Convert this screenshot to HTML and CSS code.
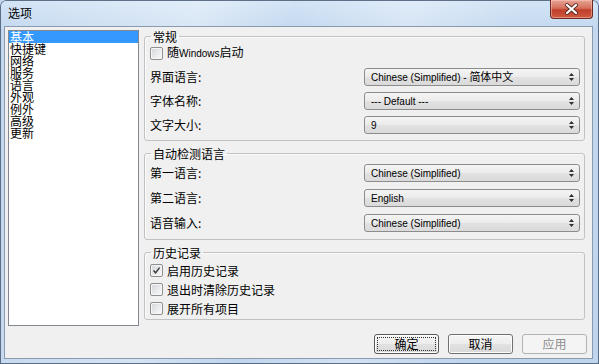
FILE: index.html
```html
<!DOCTYPE html>
<html lang="zh-CN">
<head>
<meta charset="utf-8">
<title>选项</title>
<link rel="stylesheet" href="styles.css">
</head>
<body>
<div class="window">
  <div class="titlebar">
    <span class="title">选项</span>
    <div class="close">
      <svg width="41" height="18" viewBox="0 0 41 18">
        <path d="M16 5 L25 13 M25 5 L16 13" stroke="#5a2a24" stroke-width="4" stroke-linecap="round"/>
        <path d="M16 5 L25 13 M25 5 L16 13" stroke="#ffffff" stroke-width="2.2" stroke-linecap="round"/>
      </svg>
    </div>
  </div>
  <div class="client">
    <div class="main">
      <ul class="list">
        <li class="item selected">基本</li>
        <li class="item">快捷键</li>
        <li class="item">网络</li>
        <li class="item">服务</li>
        <li class="item">语言</li>
        <li class="item">外观</li>
        <li class="item">例外</li>
        <li class="item">高级</li>
        <li class="item">更新</li>
      </ul>
      <div class="panels">
        <fieldset class="group group-general">
          <legend class="legend">常规</legend>
          <label class="check-row first-check"><span class="checkbox"></span><span class="check-text">随<span class="latin">Windows</span>启动</span></label>
          <div class="form-grid grid-general">
            <span class="label">界面语言:</span>
            <div class="select"><span class="select-text"><span class="latin">Chinese (Simplified) - </span><span class="cjk-small">简体中文</span></span><span class="arrows"><svg width="5" height="8" viewBox="0 0 5 8"><path d="M0 3 L2.5 0 L5 3 Z M0 5 L2.5 8 L5 5 Z" fill="#303030"/></svg></span></div>
            <span class="label">字体名称:</span>
            <div class="select"><span class="select-text"><span class="latin">--- Default ---</span></span><span class="arrows"><svg width="5" height="8" viewBox="0 0 5 8"><path d="M0 3 L2.5 0 L5 3 Z M0 5 L2.5 8 L5 5 Z" fill="#303030"/></svg></span></div>
            <span class="label">文字大小:</span>
            <div class="select"><span class="select-text"><span class="latin">9</span></span><span class="arrows"><svg width="5" height="8" viewBox="0 0 5 8"><path d="M0 3 L2.5 0 L5 3 Z M0 5 L2.5 8 L5 5 Z" fill="#303030"/></svg></span></div>
          </div>
        </fieldset>
        <fieldset class="group group-detect">
          <legend class="legend">自动检测语言</legend>
          <div class="form-grid grid-detect">
            <span class="label">第一语言:</span>
            <div class="select"><span class="select-text"><span class="latin">Chinese (Simplified)</span></span><span class="arrows"><svg width="5" height="8" viewBox="0 0 5 8"><path d="M0 3 L2.5 0 L5 3 Z M0 5 L2.5 8 L5 5 Z" fill="#303030"/></svg></span></div>
            <span class="label">第二语言:</span>
            <div class="select"><span class="select-text"><span class="latin">English</span></span><span class="arrows"><svg width="5" height="8" viewBox="0 0 5 8"><path d="M0 3 L2.5 0 L5 3 Z M0 5 L2.5 8 L5 5 Z" fill="#303030"/></svg></span></div>
            <span class="label">语音输入:</span>
            <div class="select"><span class="select-text"><span class="latin">Chinese (Simplified)</span></span><span class="arrows"><svg width="5" height="8" viewBox="0 0 5 8"><path d="M0 3 L2.5 0 L5 3 Z M0 5 L2.5 8 L5 5 Z" fill="#303030"/></svg></span></div>
          </div>
        </fieldset>
        <fieldset class="group group-history">
          <legend class="legend">历史记录</legend>
          <div class="check-list">
            <label class="check-row hist-row"><span class="checkbox checked"><svg width="9" height="9" viewBox="0 0 9 9"><path d="M1.5 4.5 L3.6 6.8 L7.6 1.6" fill="none" stroke="#3a3a3a" stroke-width="1.4"/></svg></span><span class="check-text">启用历史记录</span></label>
            <label class="check-row hist-row"><span class="checkbox"></span><span class="check-text">退出时清除历史记录</span></label>
            <label class="check-row hist-row"><span class="checkbox"></span><span class="check-text">展开所有项目</span></label>
          </div>
        </fieldset>
      </div>
    </div>
    <div class="buttons">
      <button class="btn btn-default"><span class="focus">确定</span></button>
      <button class="btn">取消</button>
      <button class="btn btn-disabled">应用</button>
    </div>
  </div>
</div>
</body>
</html>
```

FILE: styles.css
```css
html, body {
  margin: 0;
  padding: 0;
  width: 599px;
  height: 364px;
  overflow: hidden;
}

body {
  background: #c4d9ef;
  font-family: "Noto Sans CJK SC", "Liberation Sans", sans-serif;
  font-size: 12px;
  color: #000;
}

.window {
  width: 599px;
  height: 364px;
  box-sizing: border-box;
  display: flex;
  flex-direction: column;
  background:
    linear-gradient(100deg, rgba(255,255,255,0) 0%, rgba(255,255,255,0.35) 30%, rgba(255,255,255,0) 45%, rgba(255,255,255,0.3) 62%, rgba(255,255,255,0) 80%),
    linear-gradient(#d3e4f6, #c3d8ef 30px, #bfd5ed);
  box-shadow: inset 0 0 0 1px rgba(52, 72, 98, 0.75);
  border-radius: 6px 6px 0 0;
}

.titlebar {
  height: 26px;
  display: flex;
  justify-content: space-between;
  align-items: flex-start;
  padding-left: 8px;
}

.title {
  margin-top: 5px;
  line-height: 15px;
  font-size: 12px;
  color: #000;
}

.close {
  width: 41px;
  height: 18px;
  margin-right: 6px;
  border: 1px solid #6b2b22;
  border-top: none;
  border-radius: 0 0 4px 4px;
  background: linear-gradient(#e8a596, #d5705c 45%, #c0402b 55%, #cf5a3f);
  box-shadow: inset 0 0 0 1px rgba(255, 210, 200, 0.45);
}

.close svg {
  display: block;
}

.client {
  margin: 0 6px 5px 4px;
  flex: 1;
  border: 1px solid #8a9bb0;
  background: #f0f0f0;
  padding: 3px 5px 0 3px;
  display: flex;
  flex-direction: column;
}

.main {
  display: flex;
  gap: 5px;
  align-items: flex-start;
}

.list {
  margin: 0;
  padding: 0;
  list-style: none;
  width: 131px;
  height: 296px;
  box-sizing: border-box;
  border: 1px solid #828790;
  background: #fff;
}

.item {
  height: 12px;
  line-height: 12px;
  padding-left: 1px;
  font-size: 12px;
  white-space: nowrap;
}

.item.selected {
  background: #3399ff;
  color: #fff;
}

.panels {
  width: 441px;
  display: flex;
  flex-direction: column;
}

.group {
  margin: 0;
  min-width: 0;
  border: 1px solid #c2c2c2;
  border-radius: 3px;
  padding: 0 5px 3px 5px;
  box-shadow: inset 1px 1px 0 #fbfbfb;
}

.group-detect {
  margin-top: 6px;
  padding-bottom: 4px;
}

.group-history {
  margin-top: 6px;
  padding-top: 2px;
  padding-bottom: 1px;
}

.legend {
  padding: 0 2px;
  margin-left: 1px;
  line-height: 13px;
  height: 13px;
  font-size: 12px;
}

.check-row {
  display: flex;
  align-items: center;
  gap: 4px;
}

.first-check {
  margin-top: 2px;
  height: 16px;
}

.hist-row {
  height: 19px;
}

.checkbox {
  width: 11px;
  height: 11px;
  flex: none;
  border: 1px solid #8f8f8f;
  border-radius: 2px;
  background: linear-gradient(135deg, #d2d5d9, #f3f4f5 80%);
  box-shadow: inset 0 0 0 1px #f6f6f6;
  display: flex;
  align-items: center;
  justify-content: center;
}

.checkbox svg {
  display: block;
}

.check-text {
  line-height: 14px;
  white-space: nowrap;
}

.latin {
  font-family: "Liberation Sans", "Noto Sans CJK SC", sans-serif;
  font-size: 10px;
}

.cjk-small {
  font-size: 11px;
}

.form-grid {
  display: grid;
  grid-template-columns: 214px 216px;
  align-items: center;
}

.grid-general {
  margin-top: 4px;
  grid-auto-rows: 24px;
}

.grid-detect {
  grid-auto-rows: 25px;
}

.label {
  white-space: nowrap;
  line-height: 14px;
}

.select {
  height: 18px;
  box-sizing: border-box;
  border: 1px solid #8c8c8c;
  border-radius: 3px;
  background: linear-gradient(#f4f4f4, #ebebeb 50%, #e2e2e2 50%, #dadada);
  display: flex;
  align-items: center;
  justify-content: space-between;
  padding: 0 5px 0 6px;
}

.select-text {
  line-height: 14px;
  white-space: nowrap;
}

.arrows {
  display: flex;
  align-items: center;
}

.arrows svg {
  display: block;
}

.buttons {
  margin-top: 8px;
  display: flex;
  justify-content: flex-end;
  gap: 9px;
}

.btn {
  width: 65px;
  height: 20px;
  margin: 0;
  padding: 0;
  border: 1px solid #707070;
  border-radius: 3px;
  background: linear-gradient(#f6f6f6, #ececec 50%, #e2e2e2 50%, #d9d9d9);
  box-shadow: inset 0 0 0 1px #fcfcfc;
  font-family: "Noto Sans CJK SC", sans-serif;
  font-size: 12px;
  line-height: 14px;
  color: #000;
  display: flex;
  align-items: center;
  justify-content: center;
}

.btn-default {
  border-color: #5a5a5a;
  padding: 2px;
}

.focus {
  flex: 1;
  align-self: stretch;
  display: flex;
  align-items: center;
  justify-content: center;
  border: 1px dotted #333;
}

.btn-disabled {
  border-color: #adb2b5;
  background: #f4f4f4;
  box-shadow: none;
  color: #8d8d8d;
}
```
